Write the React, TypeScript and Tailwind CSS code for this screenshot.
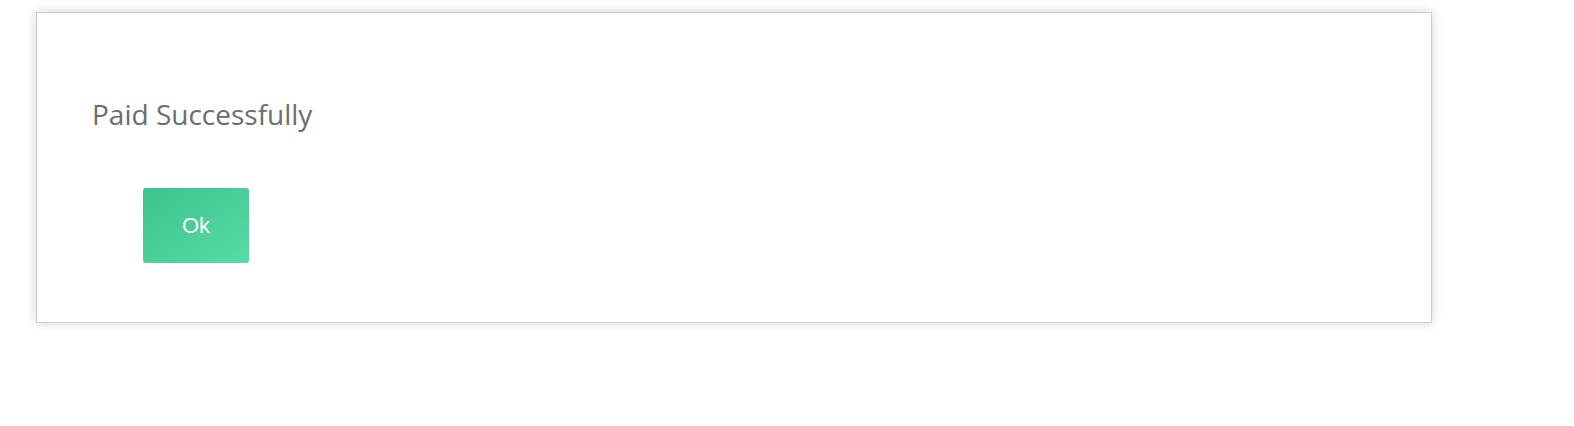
export default function App() {
  return (
    <div className="w-[1574px] h-[426px] bg-white pt-3 pl-9">
      {/* Success dialog */}
      <div className="w-[1396px] h-[311px] border border-[#cfcfcf] bg-white shadow-[0_0_10px_rgba(0,0,0,0.18)] flex flex-col">
        <p
          className="mt-[87px] ml-[55px] text-[28px] leading-none text-[#6d6d6d]"
          style={{ fontFamily: '"Open Sans", sans-serif' }}
        >
          Paid Successfully
        </p>
        <div className="mt-[60px] ml-[106px]">
          <button
            className="w-[106px] h-[75px] rounded-[3px] bg-gradient-to-br from-[#3cc28d] to-[#57dca7] text-white text-[22px]"
            style={{ fontFamily: '"Liberation Sans", Arial, sans-serif' }}
          >
            Ok
          </button>
        </div>
      </div>
    </div>
  );
}
